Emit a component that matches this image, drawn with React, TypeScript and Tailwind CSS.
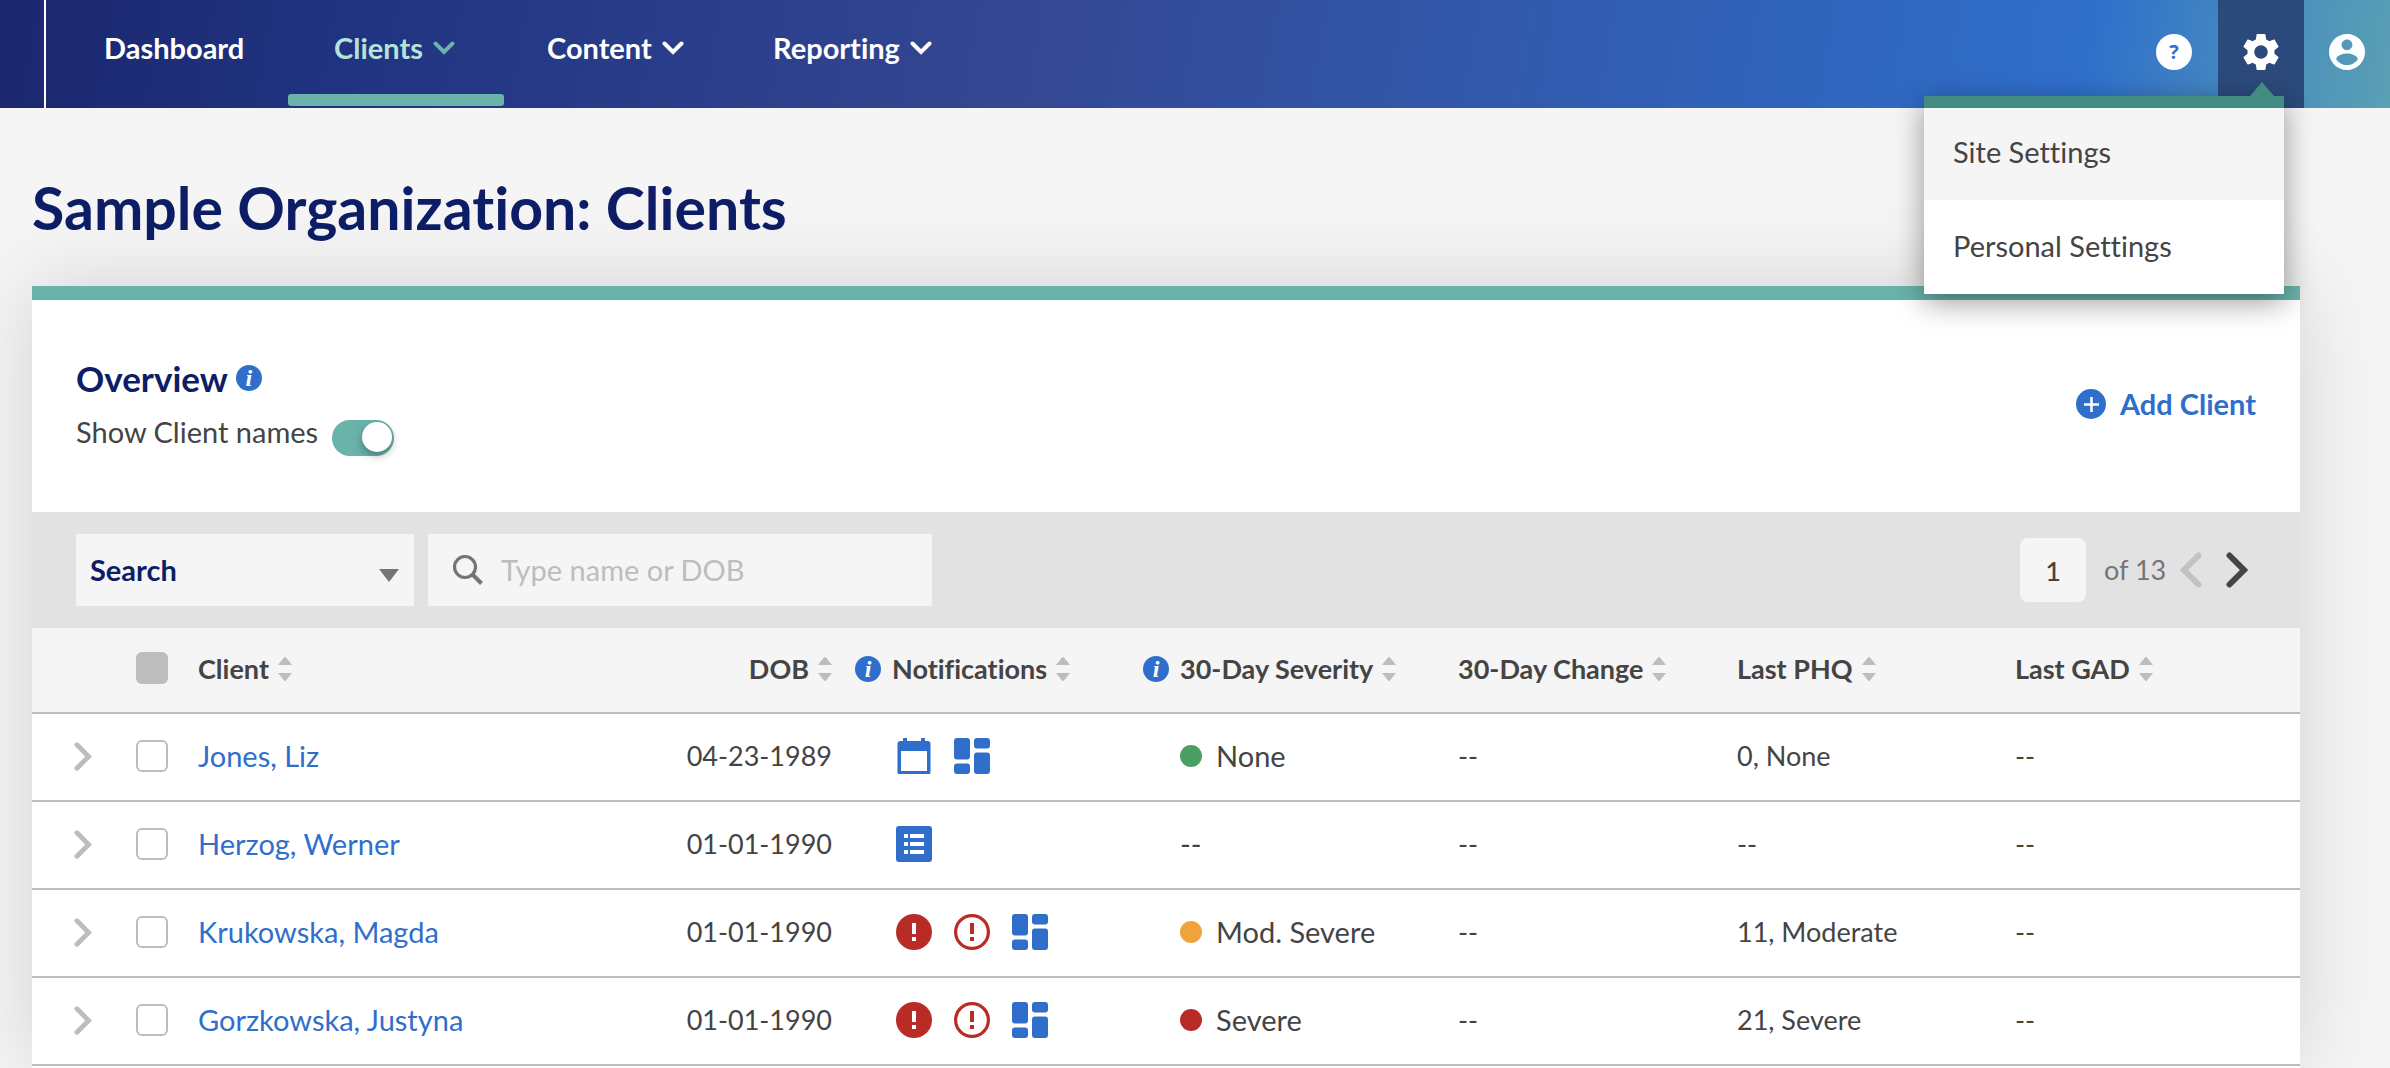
import { useState } from "react";
import type { ReactNode } from "react";

type Notification = "calendar" | "dashboard" | "list" | "alert" | "alertOutline";

interface Client {
  name: string;
  dob: string;
  notifications: Notification[];
  severity?: { label: string; dot: string };
  change: string;
  phq: string;
  gad: string;
}

const clients: Client[] = [
  {
    name: "Jones, Liz",
    dob: "04-23-1989",
    notifications: ["calendar", "dashboard"],
    severity: { label: "None", dot: "bg-[#4a9f62]" },
    change: "--",
    phq: "0, None",
    gad: "--",
  },
  {
    name: "Herzog, Werner",
    dob: "01-01-1990",
    notifications: ["list"],
    change: "--",
    phq: "--",
    gad: "--",
  },
  {
    name: "Krukowska, Magda",
    dob: "01-01-1990",
    notifications: ["alert", "alertOutline", "dashboard"],
    severity: { label: "Mod. Severe", dot: "bg-[#f0a23b]" },
    change: "--",
    phq: "11, Moderate",
    gad: "--",
  },
  {
    name: "Gorzkowska, Justyna",
    dob: "01-01-1990",
    notifications: ["alert", "alertOutline", "dashboard"],
    severity: { label: "Severe", dot: "bg-[#b92c25]" },
    change: "--",
    phq: "21, Severe",
    gad: "--",
  },
];

const navItems = [
  { label: "Dashboard", menu: false, width: "w-[242px] pl-[58px]" },
  { label: "Clients", menu: true, active: true, width: "w-[216px] pl-[46px]" },
  { label: "Content", menu: true, width: "w-[222px] pl-[43px]" },
  { label: "Reporting", menu: true, width: "w-[222px] pl-[47px]" },
];

const ChevronDown = ({ className = "" }: { className?: string }) => (
  <svg viewBox="0 0 22 14" className={`h-[14px] w-[22px] ${className}`} aria-hidden="true">
    <path d="M2.5 2.5 L11 11 L19.5 2.5" fill="none" stroke="currentColor" strokeWidth="4" strokeLinecap="round" />
  </svg>
);

const Chevron = ({ flip = false, className = "" }: { flip?: boolean; className?: string }) => (
  <svg viewBox="0 0 22 36" className={className} aria-hidden="true">
    <path
      d={flip ? "M18.5 3.5 L4 18 L18.5 32.5" : "M3.5 3.5 L18 18 L3.5 32.5"}
      fill="none"
      stroke="currentColor"
      strokeWidth="6"
      strokeLinecap="round"
    />
  </svg>
);

const SortIcon = () => (
  <svg viewBox="0 0 14 24" className="h-6 w-[14px] shrink-0 fill-[#bdbdbd]" aria-hidden="true">
    <path d="M0 8 L5.6 1 Q7 -0.8 8.4 1 L14 8z" />
    <path d="M0 16 L5.6 23 Q7 24.8 8.4 23 L14 16z" />
  </svg>
);

const InfoButton = ({ label }: { label: string }) => (
  <button
    type="button"
    aria-label={label}
    className="flex size-[26px] shrink-0 items-center justify-center rounded-full bg-[#2f6fcb] font-['Liberation_Serif',serif] text-[24px] leading-none font-bold text-white italic"
  >
    i
  </button>
);

const notificationIcons: Record<Notification, ReactNode> = {
  calendar: (
    <svg viewBox="0 0 36 36" className="size-9" role="img" aria-label="Appointment">
      <path
        fill="#2f6fcb"
        fillRule="evenodd"
        d="M7 0h4v3h14V0h4v3h2.500a3 3 0 0 1 3 3v28a3 3 0 0 1-3 3h-27a3 3 0 0 1-3-3V6a3 3 0 0 1 3-3H7zM5 13v20h26V13z"
      />
    </svg>
  ),
  dashboard: (
    <svg viewBox="0 0 36 36" className="size-9" fill="#2f6fcb" role="img" aria-label="Dashboard">
      <rect x="0" y="0" width="16" height="21.500" rx="3" />
      <rect x="20" y="0" width="16" height="10.500" rx="3" />
      <rect x="0" y="25.500" width="16" height="10.500" rx="3" />
      <rect x="20" y="14.500" width="16" height="21.500" rx="3" />
    </svg>
  ),
  list: (
    <svg viewBox="0 0 36 36" className="size-9" role="img" aria-label="Assessment">
      <rect width="36" height="36" rx="3" fill="#2f6fcb" />
      <path fill="#fff" d="M8 8h4v4H8zM14 8h14v4H14zM8 16h4v4H8zM14 16h14v4H14zM8 24h4v4H8zM14 24h14v4H14z" />
    </svg>
  ),
  alert: (
    <svg viewBox="0 0 36 36" className="size-9" role="img" aria-label="Alert">
      <circle cx="18" cy="18" r="18" fill="#b92c25" />
      <path fill="#fff" d="M16 9h4v11h-4zM16 23h4v4h-4z" />
    </svg>
  ),
  alertOutline: (
    <svg viewBox="0 0 36 36" className="size-9" role="img" aria-label="Reviewed alert">
      <circle cx="18" cy="18" r="16.400" fill="none" stroke="#b92c25" strokeWidth="3.200" />
      <path fill="#b92c25" d="M16 9h4v11h-4zM16 23h4v4h-4z" />
    </svg>
  ),
};

const HeaderCell = ({ label, info, className = "" }: { label: string; info?: boolean; className?: string }) => (
  <th scope="col" className="p-0 pb-[2px] font-bold">
    <div className={`flex items-center ${className}`}>
      {info && (
        <div className="mr-[11px] flex">
          <InfoButton label={`About ${label}`} />
        </div>
      )}
      <button type="button" className="flex items-center gap-[9px] whitespace-nowrap">
        {label}
        <SortIcon />
      </button>
    </div>
  </th>
);

const Header = () => (
  <header className="flex h-[108px] bg-[linear-gradient(100deg,#1b266d_0%,#203380_14%,#344894_44%,#2f6fcb_87%,#4a8fbd_95%,#5aa0b4_100%)] text-white">
    <div className="w-[46px] shrink-0 border-r-2 border-white" />
    <nav className="flex flex-1 font-bold">
      {navItems.map(({ label, menu, active, width }) => (
        <a
          key={label}
          href="#"
          className={`flex flex-col justify-between pt-[30px] pb-[2px] ${width} ${active ? "text-[#b5e2da]" : ""}`}
        >
          <span className="flex items-center gap-[10px]">
            {label}
            {menu && <ChevronDown className={active ? "text-[#69b3aa]" : ""} />}
          </span>
          {active && <span className="-ml-[46px] h-3 rounded-[3px] bg-[#69b3aa]" />}
        </a>
      ))}
    </nav>
    <div className="flex">
      <button type="button" aria-label="Help" className="flex w-[88px] items-center justify-center pb-1">
        <span className="flex size-9 items-center justify-center rounded-full bg-white font-['Open_Sans',sans-serif] text-[20px] leading-none font-bold text-[#2f6fcb]">
          ?
        </span>
      </button>
      <div className="relative w-[86px] bg-[#2b4a7b]">
        <button type="button" aria-label="Settings" aria-expanded="true" className="flex size-full items-center justify-center pb-1">
          <svg viewBox="2.400 2.400 19.200 19.200" className="size-9 fill-white" aria-hidden="true">
            <path d="M19.140 12.940c.04-.3.06-.61.06-.94 0-.32-.02-.64-.07-.94l2.030-1.580c.18-.14.23-.41.12-.61l-1.920-3.320c-.12-.22-.37-.29-.59-.22l-2.390.96c-.5-.38-1.030-.7-1.620-.94l-.36-2.540c-.04-.24-.24-.41-.48-.41h-3.840c-.24 0-.43.17-.47.41l-.36 2.540c-.59.24-1.130.57-1.620.94l-2.390-.96c-.22-.08-.47 0-.59.22L2.740 8.870c-.12.21-.08.47.12.61l2.030 1.580c-.05.3-.09.63-.09.94s.02.64.07.94l-2.030 1.580c-.18.14-.23.41-.12.61l1.920 3.320c.12.22.37.29.59.22l2.390-.96c.5.38 1.030.7 1.620.94l.36 2.540c.05.24.24.41.48.41h3.840c.24 0 .44-.17.47-.41l.36-2.540c.59-.24 1.130-.56 1.620-.94l2.390.96c.22.08.47 0 .59-.22l1.920-3.320c.12-.22.07-.47-.12-.61l-2.010-1.580zM12 15.600c-1.980 0-3.600-1.620-3.600-3.600s1.620-3.600 3.600-3.600 3.600 1.620 3.600 3.600-1.620 3.600-3.600 3.600z" />
          </svg>
        </button>
        <SettingsMenu />
      </div>
      <button type="button" aria-label="Account" className="flex w-[86px] items-center justify-center pb-1">
        <svg viewBox="2 2 20 20" className="size-9 fill-white" aria-hidden="true">
          <path d="M12 2C6.480 2 2 6.480 2 12s4.480 10 10 10 10-4.480 10-10S17.520 2 12 2zm0 3c1.660 0 3 1.340 3 3s-1.340 3-3 3-3-1.340-3-3 1.340-3 3-3zm0 14.200c-2.500 0-4.710-1.280-6-3.220.03-1.990 4-3.080 6-3.080 1.990 0 5.970 1.090 6 3.080-1.290 1.940-3.500 3.220-6 3.220z" />
        </svg>
      </button>
    </div>
  </header>
);

const SettingsMenu = () => (
  <div className="absolute top-[82px] right-5 z-10 w-[360px]">
    <svg viewBox="0 0 24 14" className="mr-[10px] ml-auto h-[14px] w-6 fill-[#428c81]" aria-hidden="true">
      <path d="M0 14 L12 0 L24 14z" />
    </svg>
    <div className="border-t-[12px] border-[#428c81] bg-white text-[#444] shadow-[0_8px_28px_rgba(0,0,0,0.4)]">
      <a href="#" className="flex h-[92px] items-center bg-[#f5f5f5] px-[29px] pb-1">
        Site Settings
      </a>
      <a href="#" className="flex h-[94px] items-center px-[29px] pb-[2px]">
        Personal Settings
      </a>
    </div>
  </div>
);

const Toolbar = () => (
  <div className="flex h-[116px] items-center justify-between bg-[#e2e2e2] pr-[52px] pl-11">
    <div className="flex gap-[14px]">
      <div className="relative">
        <select
          aria-label="Filter by"
          className="h-[72px] w-[338px] appearance-none bg-[#f5f5f5] px-[14px] font-bold text-[#0d1d66]"
        >
          <option>Search</option>
        </select>
        <svg viewBox="0 0 20 13" className="pointer-events-none absolute top-[35px] right-[15px] h-[13px] w-5 fill-[#757575]" aria-hidden="true">
          <path d="M0 0h20L10 13z" />
        </svg>
      </div>
      <label className="flex h-[72px] w-[504px] items-center gap-[18px] bg-[#f5f5f5] px-[25px]">
        <svg viewBox="0 0 30 30" className="size-[30px] shrink-0" fill="none" stroke="#757575" aria-hidden="true">
          <circle cx="12" cy="12" r="10.500" strokeWidth="3.200" />
          <path d="M19.500 19.500 L28.500 28.500" strokeWidth="4" />
        </svg>
        <input
          type="text"
          aria-label="Search clients"
          placeholder="Type name or DOB"
          className="w-full min-w-0 bg-transparent outline-none placeholder:text-[#bdbdbd]"
        />
      </label>
    </div>
    <div className="flex items-center text-[27px]">
      <input
        type="text"
        aria-label="Page number"
        defaultValue="1"
        className="h-16 w-[66px] rounded-lg bg-[#f5f5f5] text-center font-medium text-[#444]"
      />
      <span className="w-[94px] pl-[18px] whitespace-nowrap text-[#757575]">of 13</span>
      <button type="button" aria-label="Previous page" disabled className="mr-6">
        <Chevron flip className="h-9 w-[22px] text-[#c2c2c2]" />
      </button>
      <button type="button" aria-label="Next page">
        <Chevron className="h-9 w-[22px] text-[#444]" />
      </button>
    </div>
  </div>
);

const ClientRow = ({ client }: { client: Client }) => (
  <tr className="h-[88px] border-b-2 border-[#bdbdbd]">
    <td className="p-0 pb-[2px] pl-[42px]">
      <button type="button" aria-label={`Expand ${client.name}`} className="flex">
        <Chevron className="h-[29px] w-[18px] text-[#bdbdbd]" />
      </button>
    </td>
    <td className="p-0 pb-[2px] pl-[14px]">
      <input
        type="checkbox"
        aria-label={`Select ${client.name}`}
        className="block size-8 appearance-none rounded-md border-2 border-[#bdbdbd] bg-white checked:bg-[#2f6fcb]"
      />
    </td>
    <td className="p-0 pb-[2px] pl-[14px]">
      <a href="#" className="text-[#2f6fcb]">
        {client.name}
      </a>
    </td>
    <td className="p-0 pr-[14px] pb-[2px] text-right text-[27px] whitespace-nowrap">{client.dob}</td>
    <td className="p-0 pb-[2px] pl-[50px]">
      <div className="flex gap-[22px]">
        {client.notifications.map((n) => (
          <span key={n}>{notificationIcons[n]}</span>
        ))}
      </div>
    </td>
    <td className="p-0 pb-[2px] pl-[46px] whitespace-nowrap">
      {client.severity ? (
        <span className="flex items-center gap-[14px]">
          <span className={`size-[22px] rounded-full ${client.severity.dot}`} />
          {client.severity.label}
        </span>
      ) : (
        "--"
      )}
    </td>
    <td className="p-0 pb-[2px] pl-3 text-[27px]">{client.change}</td>
    <td className="p-0 pb-[2px] pl-3 text-[27px] whitespace-nowrap">{client.phq}</td>
    <td className="p-0 pb-[2px] pl-3 text-[27px]">{client.gad}</td>
  </tr>
);

const ClientTable = () => (
  <table className="w-full table-fixed border-collapse text-left text-[#444]">
    <colgroup>
      <col className="w-[90px]" />
      <col className="w-[62px]" />
      <col />
      <col className="w-[240px]" />
      <col className="w-[288px]" />
      <col className="w-[312px]" />
      <col className="w-[279px]" />
      <col className="w-[278px]" />
      <col className="w-[297px]" />
    </colgroup>
    <thead>
      <tr className="h-[85px] border-b-2 border-[#bdbdbd] bg-[#f5f5f5] text-[27px]">
        <td className="p-0" />
        <td className="p-0 pb-1 pl-[14px]">
          <input
            type="checkbox"
            aria-label="Select all clients"
            className="block size-8 appearance-none rounded-md bg-[#bdbdbd]"
          />
        </td>
        <HeaderCell label="Client" className="pl-[14px]" />
        <HeaderCell label="DOB" className="justify-end pr-[14px]" />
        <HeaderCell label="Notifications" info className="pl-[9px]" />
        <HeaderCell label="30-Day Severity" info className="pl-[9px]" />
        <HeaderCell label="30-Day Change" className="pl-3" />
        <HeaderCell label="Last PHQ" className="pl-3" />
        <HeaderCell label="Last GAD" className="pl-3" />
      </tr>
    </thead>
    <tbody>
      {clients.map((client) => (
        <ClientRow key={client.name} client={client} />
      ))}
    </tbody>
  </table>
);

export default function App() {
  const [showNames, setShowNames] = useState(true);

  return (
    <div className="flex min-h-screen flex-col bg-[#f5f5f5] font-[Lato,sans-serif] text-[29px] leading-9 text-[#444] [font-variant-ligatures:none]">
      <Header />
      <main className="flex flex-1 flex-col pr-[90px] pl-8">
        <h1 className="pt-16 pb-[42px] text-[59px] leading-[72px] font-bold text-[#0d1d66]">
          Sample Organization: Clients
        </h1>
        <section className="flex-1 border-t-[14px] border-[#69b3aa] bg-white shadow-[0_0_80px_rgba(0,0,0,0.14)]">
          <div className="flex h-[212px] items-center justify-between px-11">
            <div>
              <div className="flex items-center gap-2">
                <h2 className="text-[35px] leading-[44px] font-bold text-[#0d1d66]">Overview</h2>
                <InfoButton label="About overview" />
              </div>
              <label className="mt-2 flex items-center gap-[14px]">
                Show Client names
                <input
                  type="checkbox"
                  role="switch"
                  checked={showNames}
                  onChange={(e) => setShowNames(e.target.checked)}
                  className="mt-3 flex h-9 w-[62px] appearance-none rounded-full bg-[#bdbdbd] p-[2px] before:block before:size-[30px] before:rounded-full before:bg-white before:shadow-[0_4px_8px_rgba(0,0,0,0.3)] checked:justify-end checked:bg-[#69b3aa]"
                />
              </label>
            </div>
            <button type="button" className="flex items-center gap-[14px] pb-1 font-bold text-[#2f6fcb]">
              <svg viewBox="0 0 30 30" className="size-[30px]" aria-hidden="true">
                <circle cx="15" cy="15" r="15" fill="#2f6fcb" />
                <path d="M8 15.500h15M15.500 8v15" stroke="#fff" strokeWidth="2.500" />
              </svg>
              Add Client
            </button>
          </div>
          <Toolbar />
          <ClientTable />
        </section>
      </main>
    </div>
  );
}
